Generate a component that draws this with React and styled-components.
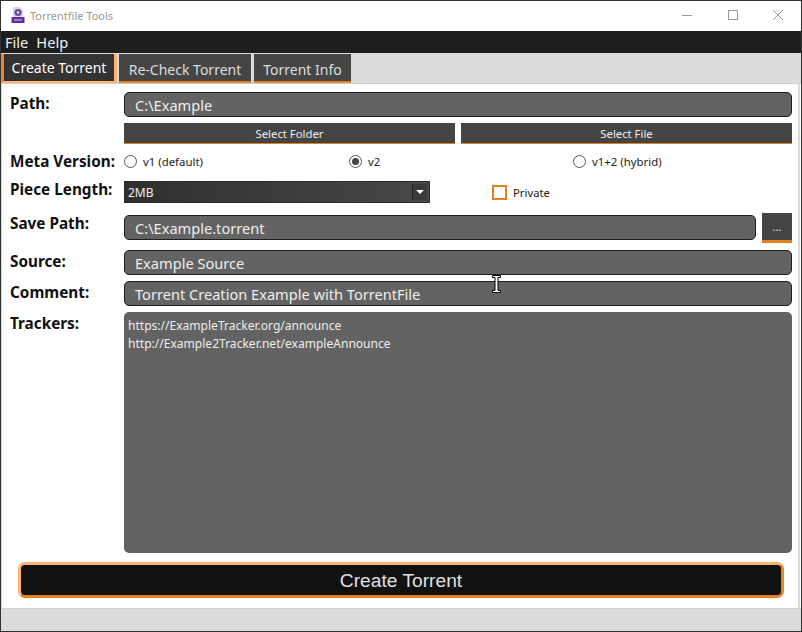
import React from 'react';
import styled, { createGlobalStyle } from 'styled-components';

const UI_FONT = '"Noto Sans", "Open Sans", "Liberation Sans", sans-serif';

const GlobalStyle = createGlobalStyle`
	html, body {
		margin: 0;
		padding: 0;
		background: #2c3330;
	}
	* {
		box-sizing: border-box;
	}
`;

const Frame = styled.div`
	position: relative;
	width: 802px;
	height: 632px;
	border: 1px solid #2c3330;
	background: #fff;
	display: flex;
	flex-direction: column;
	overflow: hidden;
	font-family: ${UI_FONT};
`;

const TitleBar = styled.div`
	height: 30px;
	flex: none;
	display: flex;
	align-items: center;
	background: #fff;
	padding: 0 0 2px 10px;
`;

const TitleText = styled.span`
	margin-left: 5px;
	font-size: 11px;
	color: #999999;
	flex: 1;
`;

const WindowButton = styled.div`
	width: 45.5px;
	height: 28px;
	display: flex;
	align-items: center;
	justify-content: center;
`;

const MenuBar = styled.div`
	height: 22px;
	flex: none;
	background: #1e1e1e;
	display: flex;
	align-items: center;
	padding-left: 4px;
	gap: 8px;
`;

const MenuItem = styled.span`
	font-size: 14.6px;
	color: #f0f0f0;
`;

const TabBar = styled.div`
	height: 31px;
	flex: none;
	background: #dcdcdc;
	display: flex;
	align-items: flex-start;
	padding-top: 1px;
	border-bottom: 1px solid #d2d2d2;
`;

const Tab = styled.div`
	height: 29px;
	width: ${p => p.$width}px;
	margin-left: ${p => p.$gap}px;
	display: flex;
	justify-content: center;
	background: ${p => (p.$active ? '#333333' : '#454545')};
	color: ${p => (p.$active ? '#ffffff' : '#dddddd')};
	font-size: 14px;
	line-height: ${p => (p.$active ? 27 : 31)}px;
	border-bottom: 2px solid ${p => (p.$active ? '#ffb273' : '#e67e22')};
	border-left: ${p => (p.$active ? '3px solid #e98526' : '0')};
	border-right: ${p => (p.$active ? '3px solid #ffb273' : '0')};
`;

const Pane = styled.div`
	flex: 1;
	display: flex;
	flex-direction: column;
	background: #fff;
	border-right: 2px solid #d9d9d9;
	border-left: 1px solid #d9d9d9;
	margin-right: 1px;
	padding: 8px 6px 0 8px;
`;

const Row = styled.div`
	display: grid;
	grid-template-columns: 114px 1fr;
	margin-top: ${p => p.$top || 0}px;
	height: ${p => p.$height}px;
`;

const Label = styled.div`
	font-size: 15.3px;
	font-weight: 700;
	color: #111;
	line-height: 20px;
	margin-top: ${p => p.$shift || 0}px;
	white-space: nowrap;
`;

const TextField = styled.div`
	flex: 1;
	height: 25px;
	background: #636363;
	border: 1px solid #1e1e1e;
	border-radius: 5px;
	color: #eeeeee;
	font-size: 14.6px;
	line-height: 25px;
	padding-left: 10px;
	white-space: nowrap;
`;

const FieldGroup = styled.div`
	display: flex;
	align-items: flex-start;
	gap: 6px;
`;

const FlatButton = styled.div`
	flex: ${p => (p.$square ? '0 0 30px' : '1')};
	height: ${p => (p.$square ? 30 : 21)}px;
	margin-top: ${p => (p.$square ? -2 : 0)}px;
	background: #444444;
	border-bottom: ${p => (p.$square ? 3 : 1)}px solid #e67e22;
	color: #eeeeee;
	font-size: 11.3px;
	display: flex;
	align-items: center;
	justify-content: center;
`;

const RadioGroup = styled.div`
	display: grid;
	grid-template-columns: 225px 224px 1fr;
	align-items: center;
`;

const RadioOption = styled.div`
	display: flex;
	align-items: center;
	gap: 6px;
	font-size: 11.4px;
	color: #222;
`;

const RadioDot = styled.span`
	width: 13px;
	height: 13px;
	border: 1px solid #555;
	border-radius: 50%;
	background: #fff;
	display: flex;
	align-items: center;
	justify-content: center;
	&::after {
		content: '';
		display: ${p => (p.$checked ? 'block' : 'none')};
		width: 7px;
		height: 7px;
		border-radius: 50%;
		background: #444;
	}
`;

const PieceRow = styled.div`
	display: flex;
	align-items: center;
`;

const Combo = styled.div`
	width: 306px;
	height: 22px;
	background: linear-gradient(90deg, #2f2f2f, #484848);
	border: 1px solid #2a2a2a;
	color: #eeeeee;
	font-size: 12px;
	padding-left: 3px;
	display: flex;
	align-items: center;
	justify-content: space-between;
`;

const ComboArrow = styled.span`
	width: 15px;
	height: 16px;
	margin-right: 2px;
	background: #3a3a3a;
	border-left: 1px solid #222;
	display: flex;
	align-items: center;
	justify-content: center;
	&::after {
		content: '';
		border-left: 4px solid transparent;
		border-right: 4px solid transparent;
		border-top: 4px solid #fff;
	}
`;

const CheckOption = styled.div`
	margin-left: 62px;
	display: flex;
	align-items: center;
	gap: 6px;
	font-size: 11.3px;
	color: #222;
`;

const CheckBox = styled.span`
	width: 15px;
	height: 15px;
	border: 2px solid #e67e22;
	background: #fff;
`;

const TrackerBox = styled.div`
	height: 241px;
	background: #636363;
	border-radius: 5px;
	color: #eeeeee;
	font-size: 12.05px;
	line-height: 18px;
	padding: 5px 4px;
`;

const CreateButton = styled.div`
	margin: 9px 8px 0 8px;
	height: 36px;
	padding-top: 2px;
	background: #111111;
	border: 3px solid;
	border-color: #ffb273 #e98526 #e67e22 #ffb273;
	border-radius: 7px;
	color: #e0e0e0;
	font-family: "Liberation Sans", Arial, sans-serif;
	font-size: 19.2px;
	display: flex;
	align-items: center;
	justify-content: center;
`;

const StatusBar = styled.div`
	height: 23px;
	flex: none;
	background: #dcdcdc;
	border-top: 1px solid #d2d2d2;
`;

const TextCursor = styled.svg`
	position: absolute;
	left: 491px;
	top: 274px;
`;

const AppIcon = () => (
	<svg width="14" height="16" viewBox="0 0 14 16">
		<path d="M2 0h7l3 3v8H2z" fill="#dcd8e2" />
		<circle cx="7" cy="5.5" r="3.6" fill="#6d4a9c" />
		<circle cx="7" cy="5.5" r="1.2" fill="#e6dff0" />
		<rect x="0.5" y="10" width="13" height="6" fill="#5f2f9f" />
		<rect x="3" y="12.5" width="8" height="1" fill="#d8c8ec" />
	</svg>
);

const App = () => {
	return (
		<Frame>
			<GlobalStyle />
			<TitleBar>
				<AppIcon />
				<TitleText>Torrentfile Tools</TitleText>
				<WindowButton>
					<svg width="10" height="10" viewBox="0 0 10 10"><path d="M0 5.5h10" stroke="#999" /></svg>
				</WindowButton>
				<WindowButton>
					<svg width="10" height="10" viewBox="0 0 10 10"><rect x="0.5" y="0.5" width="9" height="9" fill="none" stroke="#999" /></svg>
				</WindowButton>
				<WindowButton>
					<svg width="10" height="10" viewBox="0 0 10 10"><path d="M0 0l10 10M10 0L0 10" stroke="#999" /></svg>
				</WindowButton>
			</TitleBar>
			<MenuBar>
				<MenuItem>File</MenuItem>
				<MenuItem>Help</MenuItem>
			</MenuBar>
			<TabBar>
				<Tab $active $width={116} $gap={0}>Create Torrent</Tab>
				<Tab $width={132} $gap={2}>Re-Check Torrent</Tab>
				<Tab $width={97} $gap={3}>Torrent Info</Tab>
			</TabBar>
			<Pane>
				<Row $height={25}>
					<Label $shift={1}>Path:</Label>
					<FieldGroup><TextField>C:\Example</TextField></FieldGroup>
				</Row>
				<Row $top={6} $height={21}>
					<span />
					<FieldGroup>
						<FlatButton>Select Folder</FlatButton>
						<FlatButton>Select File</FlatButton>
					</FieldGroup>
				</Row>
				<Row $top={6} $height={22}>
					<Label $shift={1}>Meta Version:</Label>
					<RadioGroup>
						<RadioOption><RadioDot />v1 (default)</RadioOption>
						<RadioOption><RadioDot $checked />v2</RadioOption>
						<RadioOption><RadioDot />v1+2 (hybrid)</RadioOption>
					</RadioGroup>
				</Row>
				<Row $top={9} $height={22}>
					<Label $shift={-2}>Piece Length:</Label>
					<PieceRow>
						<Combo>2MB<ComboArrow /></Combo>
						<CheckOption><CheckBox />Private</CheckOption>
					</PieceRow>
				</Row>
				<Row $top={12} $height={25}>
					<Label $shift={-2}>Save Path:</Label>
					<FieldGroup>
						<TextField>C:\Example.torrent</TextField>
						<FlatButton $square>...</FlatButton>
					</FieldGroup>
				</Row>
				<Row $top={10} $height={25}>
					<Label $shift={1}>Source:</Label>
					<FieldGroup><TextField>Example Source</TextField></FieldGroup>
				</Row>
				<Row $top={6} $height={25}>
					<Label $shift={1}>Comment:</Label>
					<FieldGroup><TextField>Torrent Creation Example with TorrentFile</TextField></FieldGroup>
				</Row>
				<Row $top={6} $height={241}>
					<Label $shift={1}>Trackers:</Label>
					<TrackerBox>
						https://ExampleTracker.org/announce<br />
						http://Example2Tracker.net/exampleAnnounce
					</TrackerBox>
				</Row>
				<CreateButton>Create Torrent</CreateButton>
			</Pane>
			<StatusBar />
			<TextCursor width="9" height="18" viewBox="0 0 9 18">
				<path d="M0.5 0.5h8v2H6v13h2.5v2h-8v-2H3v-13H0.5z" fill="#fff" stroke="#000" strokeWidth="1" />
			</TextCursor>
		</Frame>
	);
};

export default App;
